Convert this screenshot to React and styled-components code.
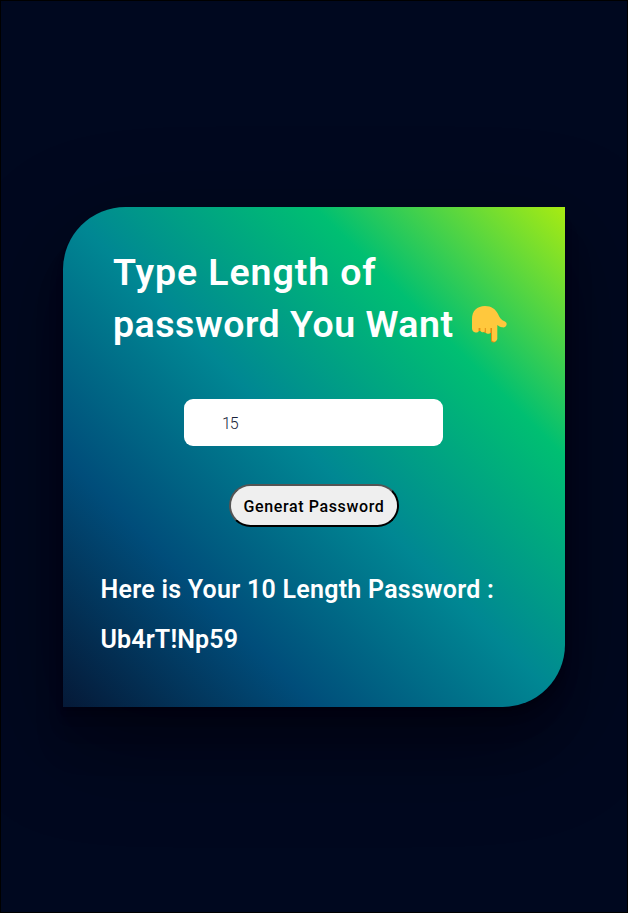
import React, { useState } from 'react';
import styled, { createGlobalStyle } from 'styled-components';

const GlobalStyle = createGlobalStyle`
  *, *::before, *::after { box-sizing: border-box; }
  body { margin: 0; background: #00081f; font-family: Roboto, sans-serif; }
`;

const Page = styled.main`
  display: flex;
  justify-content: center;
  align-items: center;
  width: 100%;
  height: 100vh;
  border: 1px solid #000;
  background: #00081f;
  overflow: hidden;
`;

const Card = styled.section`
  display: flex;
  flex-direction: column;
  align-items: center;
  width: 502px;
  height: 500px;
  padding-top: 39px;
  border-radius: 62.5px 0;
  background: linear-gradient(to right top, #051937, #004d7a, #008793, #00bf72, #a8eb12);
  box-shadow:
    0 2.8px 2.2px rgba(0, 0, 0, 0.034),
    0 6.7px 5.3px rgba(0, 0, 0, 0.048),
    0 12.5px 10px rgba(0, 0, 0, 0.06),
    0 22.3px 17.9px rgba(0, 0, 0, 0.072),
    0 41.8px 33.4px rgba(0, 0, 0, 0.086),
    0 30px 100px rgba(0, 0, 0, 0.4);
`;

const Title = styled.h1`
  width: 402px;
  margin: 0;
  color: #fff;
  font-size: 37.5px;
  font-weight: 600;
  line-height: 52px;
`;

const Line = styled.span`
  display: flex;
  white-space: pre;
  letter-spacing: ${(p) => p.$spacing || '0'};
`;

const Hand = styled.svg`
  width: 36px;
  height: 38px;
  margin: 7px 0 0 17px;
`;

const LengthInput = styled.input`
  width: 259px;
  height: 47px;
  margin: 49px 1px 0 0;
  padding: 2px 38px 0;
  border: 0;
  border-radius: 9px;
  outline: none;
  background: #fff;
  color: #172238;
  font: 300 16px Roboto, sans-serif;
  letter-spacing: -1.2px;
`;

const GenerateButton = styled.button`
  display: flex;
  justify-content: center;
  align-items: center;
  width: 170px;
  height: 43px;
  margin-top: 38px;
  padding: 2px 0 0;
  border: 2px outset #000;
  border-radius: 22px;
  background: #efefef;
  color: #000;
  font: 500 16px Roboto, sans-serif;
`;

const Result = styled.div`
  width: 427px;
  margin-top: 38px;
  color: #fff;
  font-size: 25px;
  font-weight: 600;
  line-height: 50px;
`;

function PointingHand() {
  return (
    <Hand viewBox="0 0 36 38" aria-hidden="true">
      <path
        fill="#e48c15"
        d="M5 19h20v16a2.500 2.500 0 0 1-5 0v-7h-5c-1.500 0-2.500-1-3-2H7z"
      />
      <path
        fill="#ffc83d"
        d="M1 14C1 6 6 1 14 1c6.500 0 10.500 3 13 8 1.800 4 3.500 6 6.500 7.200 1.700.7 2.500 2 2 3.800-.6 2-2.300 2.800-4.500 2.300-1.800-.4-3.200-1.200-4.700-2.300V34a3 3 0 0 1-5.300 1.500V23h-1.600v4.500c0 1.500-3.400 2-4.600.3V23h-1v3.500c-1 1.300-3.400 1-4.400-.5v-3H7.600v3.500C6.500 28.500 1 28 1 23z"
      />
    </Hand>
  );
}

export default function App() {
  const [length, setLength] = useState('15');
  return (
    <>
      <GlobalStyle />
      <Page>
        <Card>
          <Title>
            <Line $spacing="0.9px">Type Length of</Line>
            <Line $spacing="0.53px">password You Want<PointingHand /></Line>
          </Title>
          <LengthInput value={length} onChange={(e) => setLength(e.target.value)} />
          <GenerateButton type="button"><Line $spacing="0.62px">Generat Password</Line></GenerateButton>
          <Result>
            <Line $spacing="0.26px">Here is Your 10 Length Password :</Line>
            <Line $spacing="0.15px">Ub4rT!Np59</Line>
          </Result>
        </Card>
      </Page>
    </>
  );
}
